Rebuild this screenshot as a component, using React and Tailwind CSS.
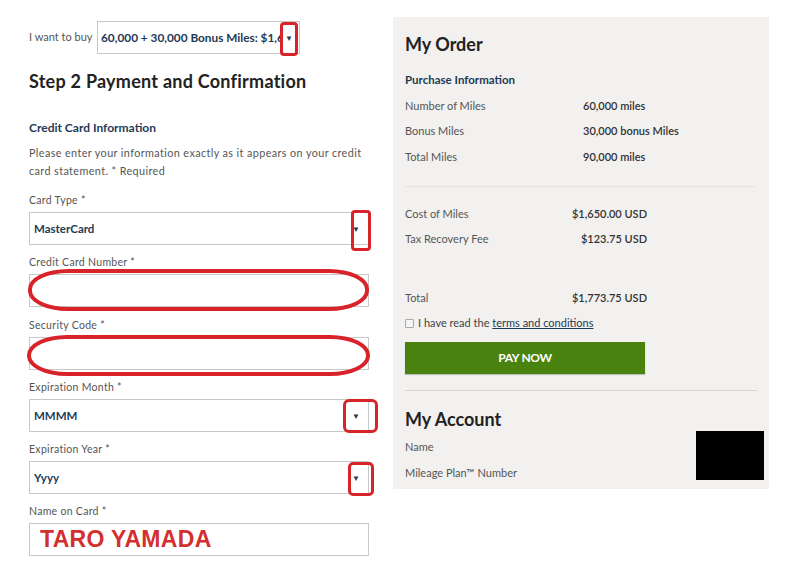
import React from "react";

const font = { fontFamily: "Lato, 'Noto Sans', sans-serif" };

const Label = ({ children }) => (
  <p className="h-[14px] leading-[14px] text-[10.5px] tracking-[0.3px] text-[#555]">{children}</p>
);

const SelectBox = ({ value }) => (
  <div className="mt-[5px] h-[33px] w-[340px] border border-[#c8c8c8] bg-white flex items-center justify-between pl-[4px] pr-[8px]">
    <span className="text-[11.5px] font-bold text-[#1f3a56]">{value}</span>
    <span className="text-[8px] text-[#1f3a56]">▼</span>
  </div>
);

const InputBox = ({ children }) => (
  <div className="mt-[5px] h-[33px] w-[340px] border border-[#c8c8c8] bg-white flex items-center pl-[10px]">
    {children}
  </div>
);

const Row = ({ label, value }) => (
  <div className="h-[25.5px] flex items-center text-[11px]">
    <span className="w-[178px] text-[#555]">{label}</span>
    <span className="font-semibold text-[#333]">{value}</span>
  </div>
);

const App = () => {
  return (
    <div className="relative w-[788px] h-[573px] bg-white flex overflow-hidden" style={font}>
      {/* left column */}
      <div className="w-[393px] pl-[29px] pt-[21px]">
        <div className="flex items-center">
          <span className="w-[68px] text-[11px] text-[#555]">I want to buy</span>
          <div className="h-[33px] w-[203px] border border-[#c8c8c8] flex items-center pl-[3px] overflow-hidden">
            <span className="w-[181px] overflow-hidden whitespace-nowrap text-[11.8px] font-bold text-[#1f3a56]">60,000 + 30,000 Bonus Miles: $1,650.00</span>
            <span className="ml-[3px] text-[8px] text-[#1f3a56]">▼</span>
          </div>
        </div>

        <h1 className="mt-[16px] h-[22px] leading-[22px] text-[18px] tracking-[0.25px] font-bold text-[#222]">Step 2 Payment and Confirmation</h1>

        <h2 className="mt-[28px] h-[16px] leading-[16px] text-[12px] font-bold text-[#1f3a56]">Credit Card Information</h2>
        <p className="mt-[8px] w-[340px] leading-[18px] text-[10.8px] tracking-[0.4px] text-[#555]">
          Please enter your information exactly as it appears on your credit card statement. * Required
        </p>

        <div className="mt-[13px]">
          <Label>Card Type *</Label>
          <SelectBox value="MasterCard" />
        </div>
        <div className="mt-[10px]">
          <Label>Credit Card Number *</Label>
          <InputBox />
        </div>
        <div className="mt-[11px]">
          <Label>Security Code *</Label>
          <InputBox />
        </div>
        <div className="mt-[10px]">
          <Label>Expiration Month *</Label>
          <SelectBox value="MMMM" />
        </div>
        <div className="mt-[10px]">
          <Label>Expiration Year *</Label>
          <SelectBox value="Yyyy" />
        </div>
        <div className="mt-[10px]">
          <Label>Name on Card *</Label>
          <InputBox>
            <span className="text-[23px] font-bold tracking-[0.3px] text-[#d32f2f]" style={{ fontFamily: "'Liberation Sans', Arial, sans-serif" }}>TARO YAMADA</span>
          </InputBox>
        </div>
      </div>

      {/* right panel */}
      <div className="relative mt-[17px] w-[376px] h-[472px] bg-[#f2f1ef] pl-[12px] pr-[12px] pt-[15px]">
        <h2 className="h-[24px] leading-[24px] text-[18px] font-bold text-[#222]">My Order</h2>
        <h3 className="mt-[16px] h-[16px] leading-[16px] text-[11.5px] font-bold text-[#1f3a56]">Purchase Information</h3>
        <div className="mt-[5px]">
          <Row label="Number of Miles" value="60,000 miles" />
          <Row label="Bonus Miles" value="30,000 bonus Miles" />
          <Row label="Total Miles" value="90,000 miles" />
        </div>
        <div className="mt-[16px] w-[350px] border-t border-[#e4e2de]" />
        <div className="mt-[15px] w-[242px]">
          <div className="h-[25px] flex items-center justify-between text-[11px]">
            <span className="text-[#555]">Cost of Miles</span>
            <span className="font-semibold text-[#333]">$1,650.00 USD</span>
          </div>
          <div className="h-[25px] flex items-center justify-between text-[11px]">
            <span className="text-[#555]">Tax Recovery Fee</span>
            <span className="font-semibold text-[#333]">$123.75 USD</span>
          </div>
          <div className="mt-[34px] h-[25px] flex items-center justify-between text-[11px]">
            <span className="text-[#555]">Total</span>
            <span className="font-semibold text-[#333]">$1,773.75 USD</span>
          </div>
        </div>
        <div className="h-[25px] flex items-center gap-[4px] text-[11px] text-[#444]">
          <span className="w-[9px] h-[9px] border border-[#aaa] bg-[#f4f4f4] rounded-[1px]" />
          <span>
            I have read the <span className="underline text-[#1f3a56]">terms and conditions</span>
          </span>
        </div>
        <button className="mt-[6px] h-[32px] w-[240px] bg-[#4a820f] text-white text-[12px] font-bold tracking-[-0.3px] shadow-[0_1px_1px_rgba(0,0,0,0.2)]">
          PAY NOW
        </button>
        <div className="mt-[16px] w-[352px] border-t border-[#d8d6d2]" />
        <h2 className="mt-[16px] h-[24px] leading-[24px] text-[18px] font-bold text-[#222]">My Account</h2>
        <div className="mt-[3px]">
          <p className="h-[26px] leading-[26px] text-[11px] text-[#555]">Name</p>
          <p className="h-[26px] leading-[26px] text-[11px] text-[#555]">Mileage Plan™ Number</p>
        </div>
        {/* redaction */}
        <div className="absolute left-[303px] top-[414px] w-[68px] h-[49px] bg-black" />
      </div>

      {/* red annotations */}
      <div className="absolute left-[280px] top-[22px] w-[18px] h-[34px] border-[3px] border-[#d8232a] rounded-[4px]" />
      <div className="absolute left-[351px] top-[210px] w-[20px] h-[41px] border-[3px] border-[#d8232a] rounded-[4px]" />
      <div className="absolute left-[28px] top-[269px] w-[341px] h-[42px] border-[4px] border-[#d8232a] rounded-[40px/20px]" />
      <div className="absolute left-[27px] top-[335px] w-[343px] h-[41px] border-[4px] border-[#d8232a] rounded-[40px/20px]" />
      <div className="absolute left-[343px] top-[399px] w-[35px] h-[34px] border-[3px] border-[#d8232a] rounded-[6px]" />
      <div className="absolute left-[348px] top-[462px] w-[26px] h-[34px] border-[3px] border-[#d8232a] rounded-[5px]" />
    </div>
  );
};

export default App;
